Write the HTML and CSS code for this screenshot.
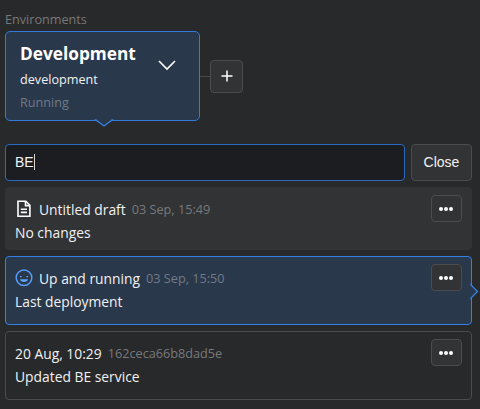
FILE: index.html
```html
<!DOCTYPE html>
<html lang="en">
<head>
<meta charset="utf-8">
<title>Environments</title>
<link rel="stylesheet" href="styles.css">
</head>
<body>
<main class="panel">
  <h2 class="heading">Environments</h2>
  <div class="environments">
    <section class="environment">
      <div class="environment-info">
        <h1 class="environment-title">Development</h1>
        <div class="environment-name">development</div>
        <div class="environment-status">Running</div>
      </div>
      <svg class="chevron" width="20" height="12" viewBox="0 0 20 12"><path d="M2 2 10 10 18 2"/></svg>
      <svg class="pointer-down" width="20" height="9" viewBox="0 0 20 9"><path class="pointer-fill" d="M1.500 0V1L10 7.200 18.500 1V0z"/><path class="pointer-line" d="M.5 1H1.800L10 7 18.200 1H19.500"/></svg>
    </section>
    <span class="connector"></span>
    <button class="button add" aria-label="Add"><svg width="14" height="14" viewBox="0 0 14 14"><path d="M7 1.500V12.500M1.500 7H12.500"/></svg></button>
  </div>
  <div class="search">
    <div class="search-field"><span class="query">BE</span><span class="caret"></span></div>
    <button class="button close">Close</button>
  </div>
  <div class="cards">
    <article class="card draft">
      <div class="card-content">
        <div class="card-title">
          <svg class="icon" width="18" height="18" viewBox="0 0 18 18"><path d="M3 1.200H10.800L14.900 5.300V16.300H3z"/><path d="M10.500 1.400V5.600H14.700M5.800 9.200H12M5.800 12.400H12"/></svg>
          <span class="title-text">Untitled draft</span><span class="meta">03 Sep, 15:49</span>
        </div>
        <div class="card-message">No changes</div>
      </div>
      <button class="button more" aria-label="More"><span></span><span></span><span></span></button>
    </article>
    <article class="card active">
      <div class="card-content">
        <div class="card-title">
          <svg class="icon smile" width="18" height="18" viewBox="0 0 18 18"><circle cx="9" cy="8.700" r="7.800"/><path class="smile-fill" d="M5 10.200H13C12.600 13.800 5.400 13.800 5 10.200z"/><path class="smile-fill" d="M5 7h1.600v1.300H5zM11.400 7H13v1.300h-1.600z"/></svg>
          <span class="title-text">Up and running</span><span class="meta">03 Sep, 15:50</span>
        </div>
        <div class="card-message">Last deployment</div>
      </div>
      <button class="button more" aria-label="More"><span></span><span></span><span></span></button>
      <svg class="pointer-right" width="9" height="17" viewBox="0 0 9 17"><path class="pointer-fill" d="M0 1.500H1L7.500 8.500 1 15.500H0z"/><path class="pointer-line" d="M1 .5V2L7.500 8.500 1 15V16.500"/></svg>
    </article>
    <article class="card">
      <div class="card-content">
        <div class="card-title"><span class="title-text">20 Aug, 10:29</span><span class="meta">162ceca66b8dad5e</span></div>
        <div class="card-message">Updated BE service</div>
      </div>
      <button class="button more" aria-label="More"><span></span><span></span><span></span></button>
    </article>
  </div>
</main>
</body>
</html>
```
FILE: styles.css
```css
* { box-sizing: border-box; }
body { margin: 0; background: #28292b; color: #f0f1f2; font-family: "Open Sans", "Noto Sans", sans-serif; font-size: 13.850px; overflow: hidden; }
.panel { width: 480px; height: 409px; padding: 9px 8px 9px 5px; }
.heading { margin: 0 0 2px; font-size: 12.650px; line-height: 20px; font-weight: 400; color: #77787a; }
.environments { display: flex; align-items: center; height: 90px; }
.environment { position: relative; display: flex; width: 195px; height: 90px; border: 1px solid #327bdc; border-radius: 5px; background: #2a384b; padding: 9px 14px; }
.environment-info { width: 137px; }
.environment-title { margin: 0; font-size: 17.250px; line-height: 25px; font-weight: 700; color: #fff; white-space: nowrap; }
.environment-name { margin-top: 2px; font-size: 12.650px; line-height: 23px; }
.environment-status { font-size: 12.650px; line-height: 23px; color: #707a87; }
.chevron { margin-top: 18px; fill: none; stroke: #fff; stroke-width: 1.600; }
.pointer-down { position: absolute; left: 88px; bottom: -8px; }
.pointer-fill { fill: #2a384b; }
.pointer-line { fill: none; stroke: #3581e3; stroke-width: 1.300; }
.connector { width: 10px; height: 1px; background: #48494b; }
.button { display: flex; align-items: center; justify-content: center; flex: none; margin: 0; padding: 0; border: 1px solid #4b4c4e; border-radius: 4px; background: #323335; color: #f2f2f3; font: 14px "Liberation Sans", sans-serif; }
.add { width: 33px; height: 33px; }
.add svg { fill: none; stroke: #fff; stroke-width: 1.500; }
.search { display: flex; gap: 6px; margin-top: 23px; height: 37px; }
.search-field { display: flex; align-items: center; width: 400px; border: 1px solid #2b6ac3; border-radius: 4px; background: #1c1d20; padding-left: 9px; font: 14px "Liberation Sans", sans-serif; }
.search-field, .close { padding-bottom: 1px; }
.caret { width: 1px; height: 16px; background: #d5d6d8; }
.close { width: 61px; }
.cards { display: grid; gap: 6px; margin-top: 6px; }
.card { position: relative; display: flex; justify-content: space-between; width: 467px; height: 69px; border: 1px solid #4b4c4e; border-radius: 4px; padding: 9px; }
.draft { height: 63px; background: #323335; border-color: #323335; }
.active { border-color: #327fe6; background: #2a384b; }
.card-title { display: flex; align-items: center; height: 24px; white-space: nowrap; }
.card-message { line-height: 23px; white-space: nowrap; }
.icon { margin-right: 6px; fill: none; stroke: #fff; stroke-width: 1.600; }
.smile { stroke: #559cf5; stroke-width: 1.500; }
.smile-fill { fill: #62a5f5; stroke: none; }
.meta { margin-left: 6px; font-size: 12.700px; color: #78797b; }
.active .meta { color: #707a88; }
.more { gap: 1px; width: 31px; height: 27px; margin: -2px 0 0; padding-right: 1px; }
.more span { width: 4px; height: 4px; border-radius: 50%; background: #fff; }
.pointer-right { position: absolute; right: -8px; top: 26px; }
```
